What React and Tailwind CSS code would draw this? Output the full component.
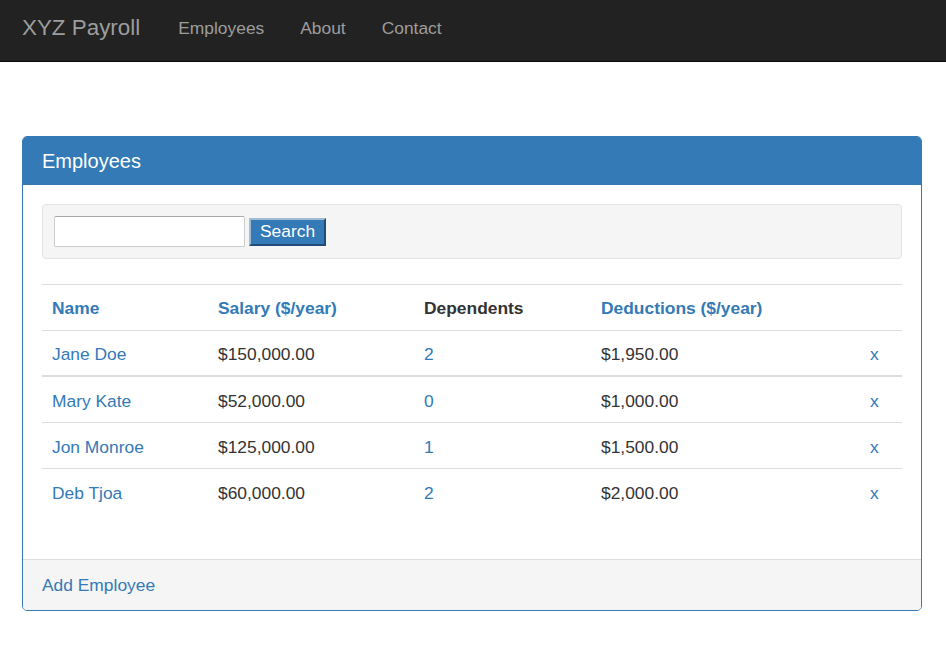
import React from "react";

const rows = [
  { name: "Jane Doe", salary: "$150,000.00", dep: "2", ded: "$1,950.00", thick: true },
  { name: "Mary Kate", salary: "$52,000.00", dep: "0", ded: "$1,000.00" },
  { name: "Jon Monroe", salary: "$125,000.00", dep: "1", ded: "$1,500.00" },
  { name: "Deb Tjoa", salary: "$60,000.00", dep: "2", ded: "$2,000.00", last: true },
];

const grid = "grid grid-cols-[166px_206px_177px_269px_1fr] items-center";

export default function App() {
  return (
    <div className="min-h-[653px] bg-white text-[#333] text-[17.4px]" style={{ fontFamily: '"Liberation Sans", Arial, sans-serif' }}>
      <nav className="h-[62px] bg-[#222] border-b border-[#080808] flex items-center pb-[4px]">
        <span className="ml-[22px] text-[22.4px] text-[#9d9d9d] leading-none">XYZ Payroll</span>
        <div className="flex ml-[20px]">
          <span className="px-[18px] text-[#9d9d9d]">Employees</span>
          <span className="px-[18px] text-[#9d9d9d]">About</span>
          <span className="px-[18px] text-[#9d9d9d]">Contact</span>
        </div>
      </nav>

      <div className="ml-[22px] mt-[74px] w-[900px] border border-[#337ab7] rounded-[5px] overflow-hidden">
        <div className="h-[48px] bg-[#337ab7] text-white text-[20px] flex items-center pl-[19px]">Employees</div>
        <div className="px-[19px] pt-[19px] pb-[44px]">
          <div className="h-[55px] bg-[#f5f5f5] border border-[#e3e3e3] rounded-[4px] flex items-center pl-[11px]">
            <input className="w-[191px] h-[31px] bg-white border border-[#ccc] border-t-[#aaa] rounded-[2px] outline-none" />
            <button className="ml-[4px] h-[28px] px-[9px] bg-[#337ab7] text-white text-[17.4px] border-2 border-t-[#9fbbd6] border-l-[#9fbbd6] border-r-[#1f4c78] border-b-[#1f4c78] leading-none">Search</button>
          </div>
          <div className="mt-[25px] border-t border-[#ddd]">
            <div className={`${grid} h-[46px] border-b border-[#ddd] font-bold pt-[2px]`}>
              <span className="pl-[10px] text-[#337ab7]">Name</span>
              <span className="pl-[10px] text-[#337ab7]">Salary ($/year)</span>
              <span className="pl-[10px] text-[#333]">Dependents</span>
              <span className="pl-[10px] text-[#337ab7]">Deductions ($/year)</span>
              <span></span>
            </div>
            {rows.map((r) => (
              <div
                key={r.name}
                className={`${grid} pt-[3px] ${r.thick ? "h-[46px] border-b-2" : "h-[46px] border-b"} ${r.last ? "border-transparent" : "border-[#ddd]"}`}
              >
                <span className="pl-[10px] text-[#337ab7]">{r.name}</span>
                <span className="pl-[10px]">{r.salary}</span>
                <span className="pl-[10px] text-[#337ab7]">{r.dep}</span>
                <span className="pl-[10px]">{r.ded}</span>
                <span className="pl-[10px] text-[#337ab7]">x</span>
              </div>
            ))}
          </div>
        </div>
        <div className="h-[51px] bg-[#f5f5f5] border-t border-[#ddd] flex items-center pl-[19px] text-[#337ab7]">Add Employee</div>
      </div>
    </div>
  );
}
